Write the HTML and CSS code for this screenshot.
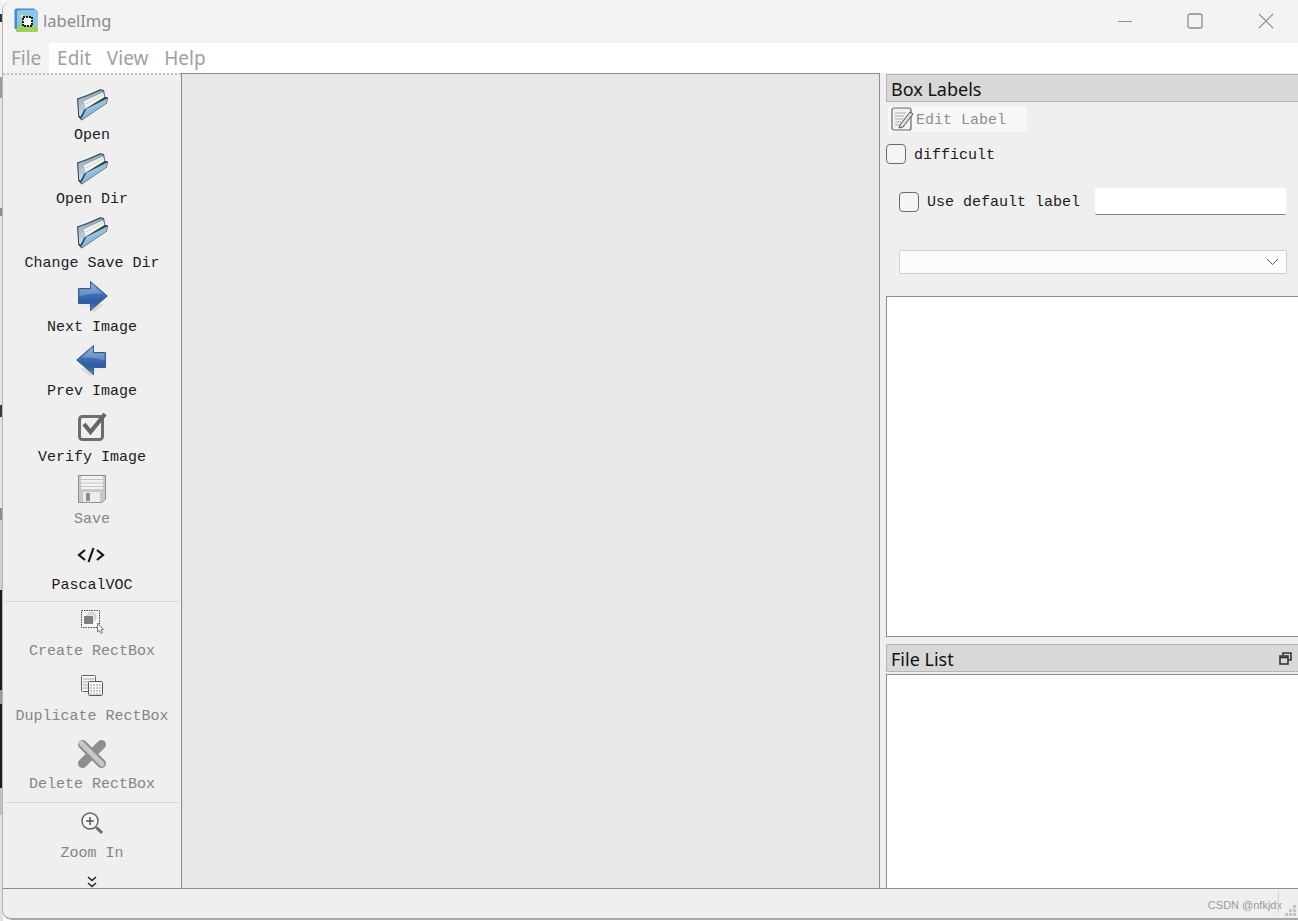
FILE: index.html
```html
<!DOCTYPE html>
<html lang="en">
<head>
    <meta charset="UTF-8">
    <meta name="viewport" content="width=device-width, initial-scale=1.0">
    <title>labelImg</title>
    <link rel="stylesheet" href="styles.css">
</head>
<body>
    <svg width="0" height="0" class="defs">
        <defs>
            <linearGradient id="folderFront" x1="0" y1="0" x2="0.6" y2="1">
                <stop offset="0" stop-color="#c4dded"/>
                <stop offset="1" stop-color="#6fa9cd"/>
            </linearGradient>
            <linearGradient id="folderBack" x1="0" y1="0" x2="0" y2="1">
                <stop offset="0" stop-color="#8ba2b0"/>
                <stop offset="1" stop-color="#c4dbe8"/>
            </linearGradient>
            <linearGradient id="arrowFill" x1="0" y1="0" x2="0" y2="1">
                <stop offset="0" stop-color="#86a8d3"/>
                <stop offset="0.45" stop-color="#3e6fb2"/>
                <stop offset="0.7" stop-color="#2c5da3"/>
                <stop offset="1" stop-color="#5a88c2"/>
            </linearGradient>
            <symbol id="folder" viewBox="0 0 32 34">
                <path d="M1 10.5 L11 7 L24 1.3 L28 2 L29 8.7 L32 9.3 L31 15.3 L5.7 32.5 L2.3 29 Z" fill="#39454d"/>
                <path d="M2.2 11.2 L11.5 8 L24 2.5 L27.5 3 L28 9 L8 22 L4.6 28.6 L3.2 27.8 Z" fill="url(#folderBack)"/>
                <path d="M9.2 19.4 L8 13.5 L17 9 L27 4.4 L28.5 9 L12.5 18.6 Z" fill="#f4f4f2"/>
                <path d="M9.5 16 L27.5 6.5" stroke="#cfcfcf" stroke-width="1" fill="none"/>
                <path d="M5 31 L10.7 20.8 L31.2 10.6 L30.3 15.2 L6.5 31.4 Z" fill="url(#folderFront)"/>
            </symbol>
            <symbol id="arrow" viewBox="0 0 32 32">
                <path d="M4 26 H14 V31 L18 32 L28 24 Z" fill="#c8c8c8" opacity="0.6"/>
                <path d="M2.5 8.5 H14.5 V1.5 L31.3 16 L14.5 30.5 V23.5 H2.5 Z" fill="url(#arrowFill)" stroke="#34598f" stroke-width="1"/>
                <path d="M3.5 9.5 H15.5 V4 L27 14 C19 12.5 11 14 3.5 17 Z" fill="#fff" opacity="0.2"/>
            </symbol>
        </defs>
    </svg>

    <div class="backdrop"></div>

    <div class="window">
        <div class="titlebar">
            <svg class="app-logo" width="24" height="24" viewBox="0 0 24 24">
                <rect x="0.5" y="0.5" width="21" height="21" rx="2" fill="#3f8fca"/>
                <rect x="3" y="2" width="21" height="20" rx="2" fill="#8cc6ea"/>
                <path d="M2 24 L2 22 L11 10 L19 16 L24 21 L24 24 Z" fill="#9fd05a"/>
                <circle cx="8" cy="8" r="1.8" fill="#f6e85e"/>
                <rect x="9" y="9" width="9" height="9" fill="#fff" stroke="#1d1d1d" stroke-width="2" stroke-dasharray="2 1"/>
            </svg>
            <span class="app-name">labelImg</span>
            <div class="win-controls">
                <svg width="14" height="16" viewBox="0 0 14 16"><path d="M0 8.5 H15" stroke="#8d8d8d" stroke-width="1" fill="none"/></svg>
                <svg width="16" height="16" viewBox="0 0 16 16"><rect x="1" y="1" width="14" height="14" rx="2" stroke="#8d8d8d" stroke-width="1.3" fill="none"/></svg>
                <svg width="16" height="16" viewBox="0 0 16 16"><path d="M1 1 L15 15 M15 1 L1 15" stroke="#8d8d8d" stroke-width="1.1" fill="none"/></svg>
            </div>
        </div>

        <div class="menubar">
            <span class="menu-entry active">File</span>
            <span class="menu-entry">Edit</span>
            <span class="menu-entry">View</span>
            <span class="menu-entry">Help</span>
        </div>

        <div class="main">
            <div class="toolbar">
                <div class="tool">
                    <svg width="32" height="34"><use href="#folder"/></svg>
                    <span class="folder-label">Open</span>
                </div>
                <div class="tool">
                    <svg width="32" height="34"><use href="#folder"/></svg>
                    <span class="folder-label">Open Dir</span>
                </div>
                <div class="tool">
                    <svg width="32" height="34"><use href="#folder"/></svg>
                    <span class="folder-label">Change Save Dir</span>
                </div>
                <div class="tool">
                    <svg width="32" height="32"><use href="#arrow"/></svg>
                    <span>Next Image</span>
                </div>
                <div class="tool">
                    <svg class="flip" width="32" height="32"><use href="#arrow"/></svg>
                    <span>Prev Image</span>
                </div>
                <div class="tool tool-verify">
                    <svg width="32" height="32" viewBox="0 0 32 32">
                        <rect x="3.5" y="6.5" width="23" height="23" rx="3" fill="none" stroke="#6e6e6e" stroke-width="3"/>
                        <path d="M8 14 L14.5 22 L29 4" fill="none" stroke="#666" stroke-width="4.2"/>
                    </svg>
                    <span>Verify Image</span>
                </div>
                <div class="tool off tool-save">
                    <svg width="32" height="32" viewBox="0 0 32 32">
                        <path d="M2.5 3.5 H29.5 V27 L26 30.5 H2.5 Z" fill="#c8c8c8" stroke="#8f8f8f" stroke-width="1"/>
                        <rect x="5" y="4" width="22" height="13" fill="#f3f3f3"/>
                        <path d="M5 7.5 H27 M5 11 H27 M5 14.5 H27" stroke="#c2c2c2" stroke-width="1"/>
                        <rect x="7" y="20" width="17" height="10" fill="#ececec"/>
                        <rect x="10" y="21" width="4" height="8" fill="#8d8d8d"/>
                    </svg>
                    <span>Save</span>
                </div>
                <div class="tool tool-format">
                    <svg width="32" height="32" viewBox="0 0 32 32">
                        <path d="M9 11 L3 16 L9 21 M21 11 L27 16 L21 21 M17.5 9 L12.5 23" fill="none" stroke="#161616" stroke-width="2.2"/>
                    </svg>
                    <span>PascalVOC</span>
                </div>
                <div class="tool-sep"></div>
                <div class="tool off tool-create">
                    <svg width="32" height="32" viewBox="0 0 32 32">
                        <rect x="5.5" y="2.5" width="18" height="17" fill="#f7f7f7" stroke="#444" stroke-width="1" stroke-dasharray="1.5 1"/>
                        <circle cx="15.5" cy="9" r="4.5" fill="#e2e2e2" stroke="#aaa" stroke-width="0.7"/>
                        <rect x="8" y="8" width="9" height="8" fill="#808080"/>
                        <path d="M21.6 15 L21.6 24 L23.4 22.4 L25 25.5 L26.4 24.8 L25 21.8 L27.4 21.6 Z" fill="#fff" stroke="#5c5c5c" stroke-width="0.8"/>
                    </svg>
                    <span>Create RectBox</span>
                </div>
                <div class="tool off tool-dup">
                    <svg width="32" height="32" viewBox="0 0 32 32">
                        <rect x="5.5" y="3.5" width="14" height="16" rx="1" fill="#f4f4f4" stroke="#666" stroke-width="1"/>
                        <path d="M7 7 H18 M7 10 H18 M7 13 H18 M7 16 H18" stroke="#aaa" stroke-width="1"/>
                        <rect x="12.5" y="9.5" width="14" height="14" rx="1" fill="#fafafa" stroke="#555" stroke-width="1"/>
                        <path d="M14 13 H25 M14 16 H25 M14 19 H25 M14 22 H25" stroke="#999" stroke-width="1" stroke-dasharray="2 1"/>
                    </svg>
                    <span>Duplicate RectBox</span>
                </div>
                <div class="tool off tool-del">
                    <svg width="32" height="32" viewBox="0 0 32 32">
                        <path d="M6.5 8.5 L25.5 27.5 M25.5 8.5 L6.5 27.5" fill="none" stroke="#8e8e8e" stroke-width="9" stroke-linecap="round"/>
                        <path d="M5 7 L26 28" fill="none" stroke="#c8c8c8" stroke-width="5" stroke-linecap="round"/>
                    </svg>
                    <span>Delete RectBox</span>
                </div>
                <div class="tool-sep"></div>
                <div class="tool off tool-zoom">
                    <svg width="32" height="32" viewBox="0 0 32 32">
                        <circle cx="14" cy="15" r="8" fill="#f7f7f7" stroke="#5f5f5f" stroke-width="1.4"/>
                        <path d="M14 11 V19 M10 15 H18" stroke="#555" stroke-width="1.5"/>
                        <path d="M20.5 21.5 L26 27" stroke="#6a6a6a" stroke-width="3"/>
                    </svg>
                    <span>Zoom In</span>
                </div>
                <svg class="more" width="10" height="12" viewBox="0 0 10 12">
                    <path d="M1 1 L5 4.5 L9 1 M1 7 L5 10.5 L9 7" fill="none" stroke="#222" stroke-width="1.5"/>
                </svg>
            </div>

            <div class="canvas"></div>

            <div class="side">
                <div class="dock-title">Box Labels</div>
                <div class="edit-label">
                    <svg width="23" height="24" viewBox="0 0 23 24">
                        <rect x="1" y="1" width="19" height="22" rx="2" fill="#f2f2f2" stroke="#666" stroke-width="1.2"/>
                        <path d="M4 6 H15 M4 9 H13 M4 12 H12 M4 15 H10 M4 18 H9" stroke="#aaa" stroke-width="1"/>
                        <path d="M9 18 L19 5 L22 7 L12 20 L8 21 Z" fill="#ddd" stroke="#555" stroke-width="1"/>
                    </svg>
                    <span>Edit Label</span>
                </div>
                <div class="check-row difficult">
                    <span class="checkbox"></span>
                    <span class="mono-label">difficult</span>
                </div>
                <div class="default-row">
                    <span class="checkbox"></span>
                    <span class="default-text mono-label">Use default label</span>
                    <div class="line-input"></div>
                </div>
                <div class="combo">
                    <svg width="13" height="8" viewBox="0 0 13 8"><path d="M1 1 L6.5 6.5 L12 1" fill="none" stroke="#555" stroke-width="1"/></svg>
                </div>
                <div class="list list-labels"></div>
                <div class="dock-title file-title">
                    <span>File List</span>
                    <svg width="13" height="13" viewBox="0 0 13 13">
                        <path d="M4 3 V1 H12 V8 H9.5" fill="none" stroke="#333" stroke-width="1.6"/>
                        <rect x="1" y="4" width="8" height="8" fill="none" stroke="#333" stroke-width="1.6"/>
                        <path d="M1 5.5 H9" stroke="#333" stroke-width="1.6"/>
                    </svg>
                </div>
                <div class="list list-files"></div>
            </div>
        </div>

        <div class="statusbar">
            <span class="watermark">CSDN @nfkjdx</span>
            <span class="status-tick"></span>
            <svg class="grip" width="12" height="12" viewBox="0 0 12 12">
                <path d="M8 1 h3 v3 h-3 z M8 5 h3 v3 h-3 z M4 5 h3 v3 h-3 z M8 9 h3 v3 h-3 z M4 9 h3 v3 h-3 z M0 9 h3 v3 h-3 z" fill="#c4c4c4"/>
            </svg>
        </div>
    </div>
</body>
</html>
```

FILE: styles.css
```css
html, body {
    margin: 0;
    padding: 0;
    height: 921px;
    overflow: hidden;
}
body {
    position: relative;
    background: #fff;
    font-family: "Liberation Mono", monospace;
}
.defs {
    position: absolute;
}
/* whatever is behind the window, only a sliver shows on the left */
.backdrop {
    position: absolute;
    left: 0;
    top: 0;
    width: 3px;
    height: 921px;
    background: linear-gradient(to bottom,
        #f4f4f4 0 14px, #333 14px 22px, #f0f0f0 22px 77px,
        #9a9a9a 77px 98px, #e4e4e4 98px 208px, #8e8e8e 208px 216px,
        #e4e4e4 216px 405px, #3a3a3a 405px 417px, #e4e4e4 417px 508px,
        #8e8e8e 508px 520px, #cfcfcf 520px 590px, #1c1c1c 590px 690px,
        #9a9a9a 690px 704px, #1c1c1c 704px 788px, #c0c0c0 788px 815px,
        #e2e2e2 815px);
}
.window {
    position: relative;
    margin-left: 2px;
    width: 1296px;
    height: 920px;
    background: #efefef;
    border-left: 1px solid #b4b4b4;
    border-bottom: 2px solid #a9a9a9;
    border-radius: 10px 0 0 10px;
    box-sizing: border-box;
    display: flex;
    flex-direction: column;
    overflow: hidden;
}

/* title + menu */
.titlebar {
    height: 43px;
    flex: none;
    background: #f3f3f3;
    display: flex;
    align-items: center;
    padding-left: 11px;
}
.app-logo {
    margin-top: -3px;
}
.app-name {
    font-family: "Noto Sans", sans-serif;
    font-size: 16.5px;
    color: #8a8a8a;
    margin-left: 5px;
    margin-top: -3px;
}
.win-controls {
    margin-left: auto;
    display: flex;
    gap: 55px;
    padding-right: 24px;
    margin-top: -2px;
}
.menubar {
    height: 30px;
    flex: none;
    background: #fff;
    display: flex;
}
.menu-entry {
    font-family: "Noto Sans", sans-serif;
    font-size: 19px;
    line-height: 30px;
    color: #a0a0a0;
    padding: 0 7.9px;
}
.menu-entry.active {
    background: #f3f3f3;
    border-radius: 0 0 3px 3px;
}

/* main row */
.main {
    flex: 1;
    min-height: 0;
    display: flex;
    align-items: stretch;
    border-bottom: 1px solid #8f8f8f;
}
.toolbar {
    width: 178px;
    flex: none;
    border-top: 2px dotted #c2c2c2;
    display: flex;
    flex-direction: column;
    align-items: center;
    box-sizing: border-box;
    padding-top: 13px;
}
.tool {
    display: flex;
    flex-direction: column;
    align-items: center;
    height: 64px;
    flex: none;
    white-space: nowrap;
}
.tool span {
    font-size: 15px;
    line-height: 17px;
    color: #1c1c1c;
    margin-top: 7px;
}
.tool .folder-label {
    margin-top: 5px;
}
.tool.off span {
    color: #858585;
}
.tool svg {
    flex: none;
}
.flip {
    transform: scaleX(-1);
}
.tool-verify {
    margin-top: 2px;
    height: 62px;
}
.tool-save {
    height: 67px;
}
.tool-format {
    height: 58px;
}
.tool-format span {
    margin-top: 6px;
}
.tool-sep {
    width: 172px;
    height: 1px;
    background: #d4d4d4;
    flex: none;
    margin-top: 4px;
}
.tool-create {
    margin-top: 6px;
}
.tool-create span {
    margin-top: 3px;
}
.tool-dup span {
    margin-top: 4px;
}
.tool-del {
    height: 62px;
}
.tool-del span {
    margin-top: 8px;
}
.tool-zoom {
    margin-top: 3px;
    height: 68px;
}
.tool-zoom span {
    margin-top: 7px;
}
.more {
    margin-top: 2px;
}
.canvas {
    width: 699px;
    flex: none;
    background: #e7e7e7;
    border: 1px solid #8a8a9a;
    border-bottom: none;
    box-sizing: border-box;
}

/* right docks */
.side {
    width: 414px;
    flex: none;
    margin-left: 6px;
    display: flex;
    flex-direction: column;
}
.dock-title {
    height: 28px;
    flex: none;
    margin-top: 1px;
    background: #d8d8d8;
    border: 1px solid #b4b4b4;
    box-sizing: border-box;
    font-family: "Noto Sans", sans-serif;
    font-size: 18px;
    line-height: 29px;
    color: #111;
    padding-left: 4px;
}
.edit-label {
    width: 139px;
    height: 26px;
    margin: 4px 0 0 2px;
    background: #f7f7f7;
    border-radius: 3px;
    display: flex;
    align-items: center;
    gap: 2px;
    padding-left: 3px;
    box-sizing: border-box;
    font-size: 15px;
    color: #8e8e8e;
}
.edit-label span, .mono-label {
    padding-top: 2px;
}
.checkbox {
    width: 20px;
    height: 20px;
    flex: none;
    border: 1px solid #6c6c6c;
    border-radius: 4px;
    background: #f5f5f5;
    box-sizing: border-box;
}
.check-row {
    display: flex;
    align-items: center;
    font-size: 15px;
    color: #1c1c1c;
}
.difficult {
    margin-top: 12px;
    gap: 8px;
}
.default-row {
    display: flex;
    align-items: center;
    margin: 24px 12px 0 13px;
    font-size: 15px;
    color: #1c1c1c;
}
.default-text {
    margin-left: 8px;
}
.line-input {
    width: 191px;
    height: 27px;
    margin-left: 15px;
    background: #fff;
    border-bottom: 1px solid #808080;
    box-sizing: border-box;
    border-radius: 2px;
}
.combo {
    margin: 35px 11px 0 13px;
    width: 388px;
    height: 24px;
    background: #fcfcfc;
    border: 1px solid #cfcfcf;
    border-radius: 2px;
    box-sizing: border-box;
    display: flex;
    align-items: center;
    justify-content: flex-end;
    padding-right: 7px;
}
.list {
    background: #fff;
    border: 1px solid #8a8a9a;
    box-sizing: border-box;
}
.list-labels {
    margin-top: 22px;
    height: 341px;
    flex: none;
}
.file-title {
    margin-top: 7px;
    display: flex;
    align-items: center;
    justify-content: space-between;
    padding-right: 7px;
}
.file-title span {
    padding-top: 2px;
}
.list-files {
    margin-top: 2px;
    flex: 1;
    border-bottom: none;
}

/* status */
.statusbar {
    position: relative;
    height: 29px;
    flex: none;
    background: #efefef;
    box-sizing: border-box;
    display: flex;
    align-items: center;
    justify-content: flex-end;
    padding-right: 1px;
}
.watermark {
    font-family: "Liberation Sans", sans-serif;
    font-size: 11px;
    color: #9a9a9a;
    margin-right: 3px;
    padding-top: 3px;
}
.status-tick {
    position: absolute;
    right: 19px;
    top: 2px;
    width: 1px;
    height: 22px;
    background: #d0d0d0;
}
.grip {
    align-self: flex-end;
    margin-bottom: 2px;
}
```
